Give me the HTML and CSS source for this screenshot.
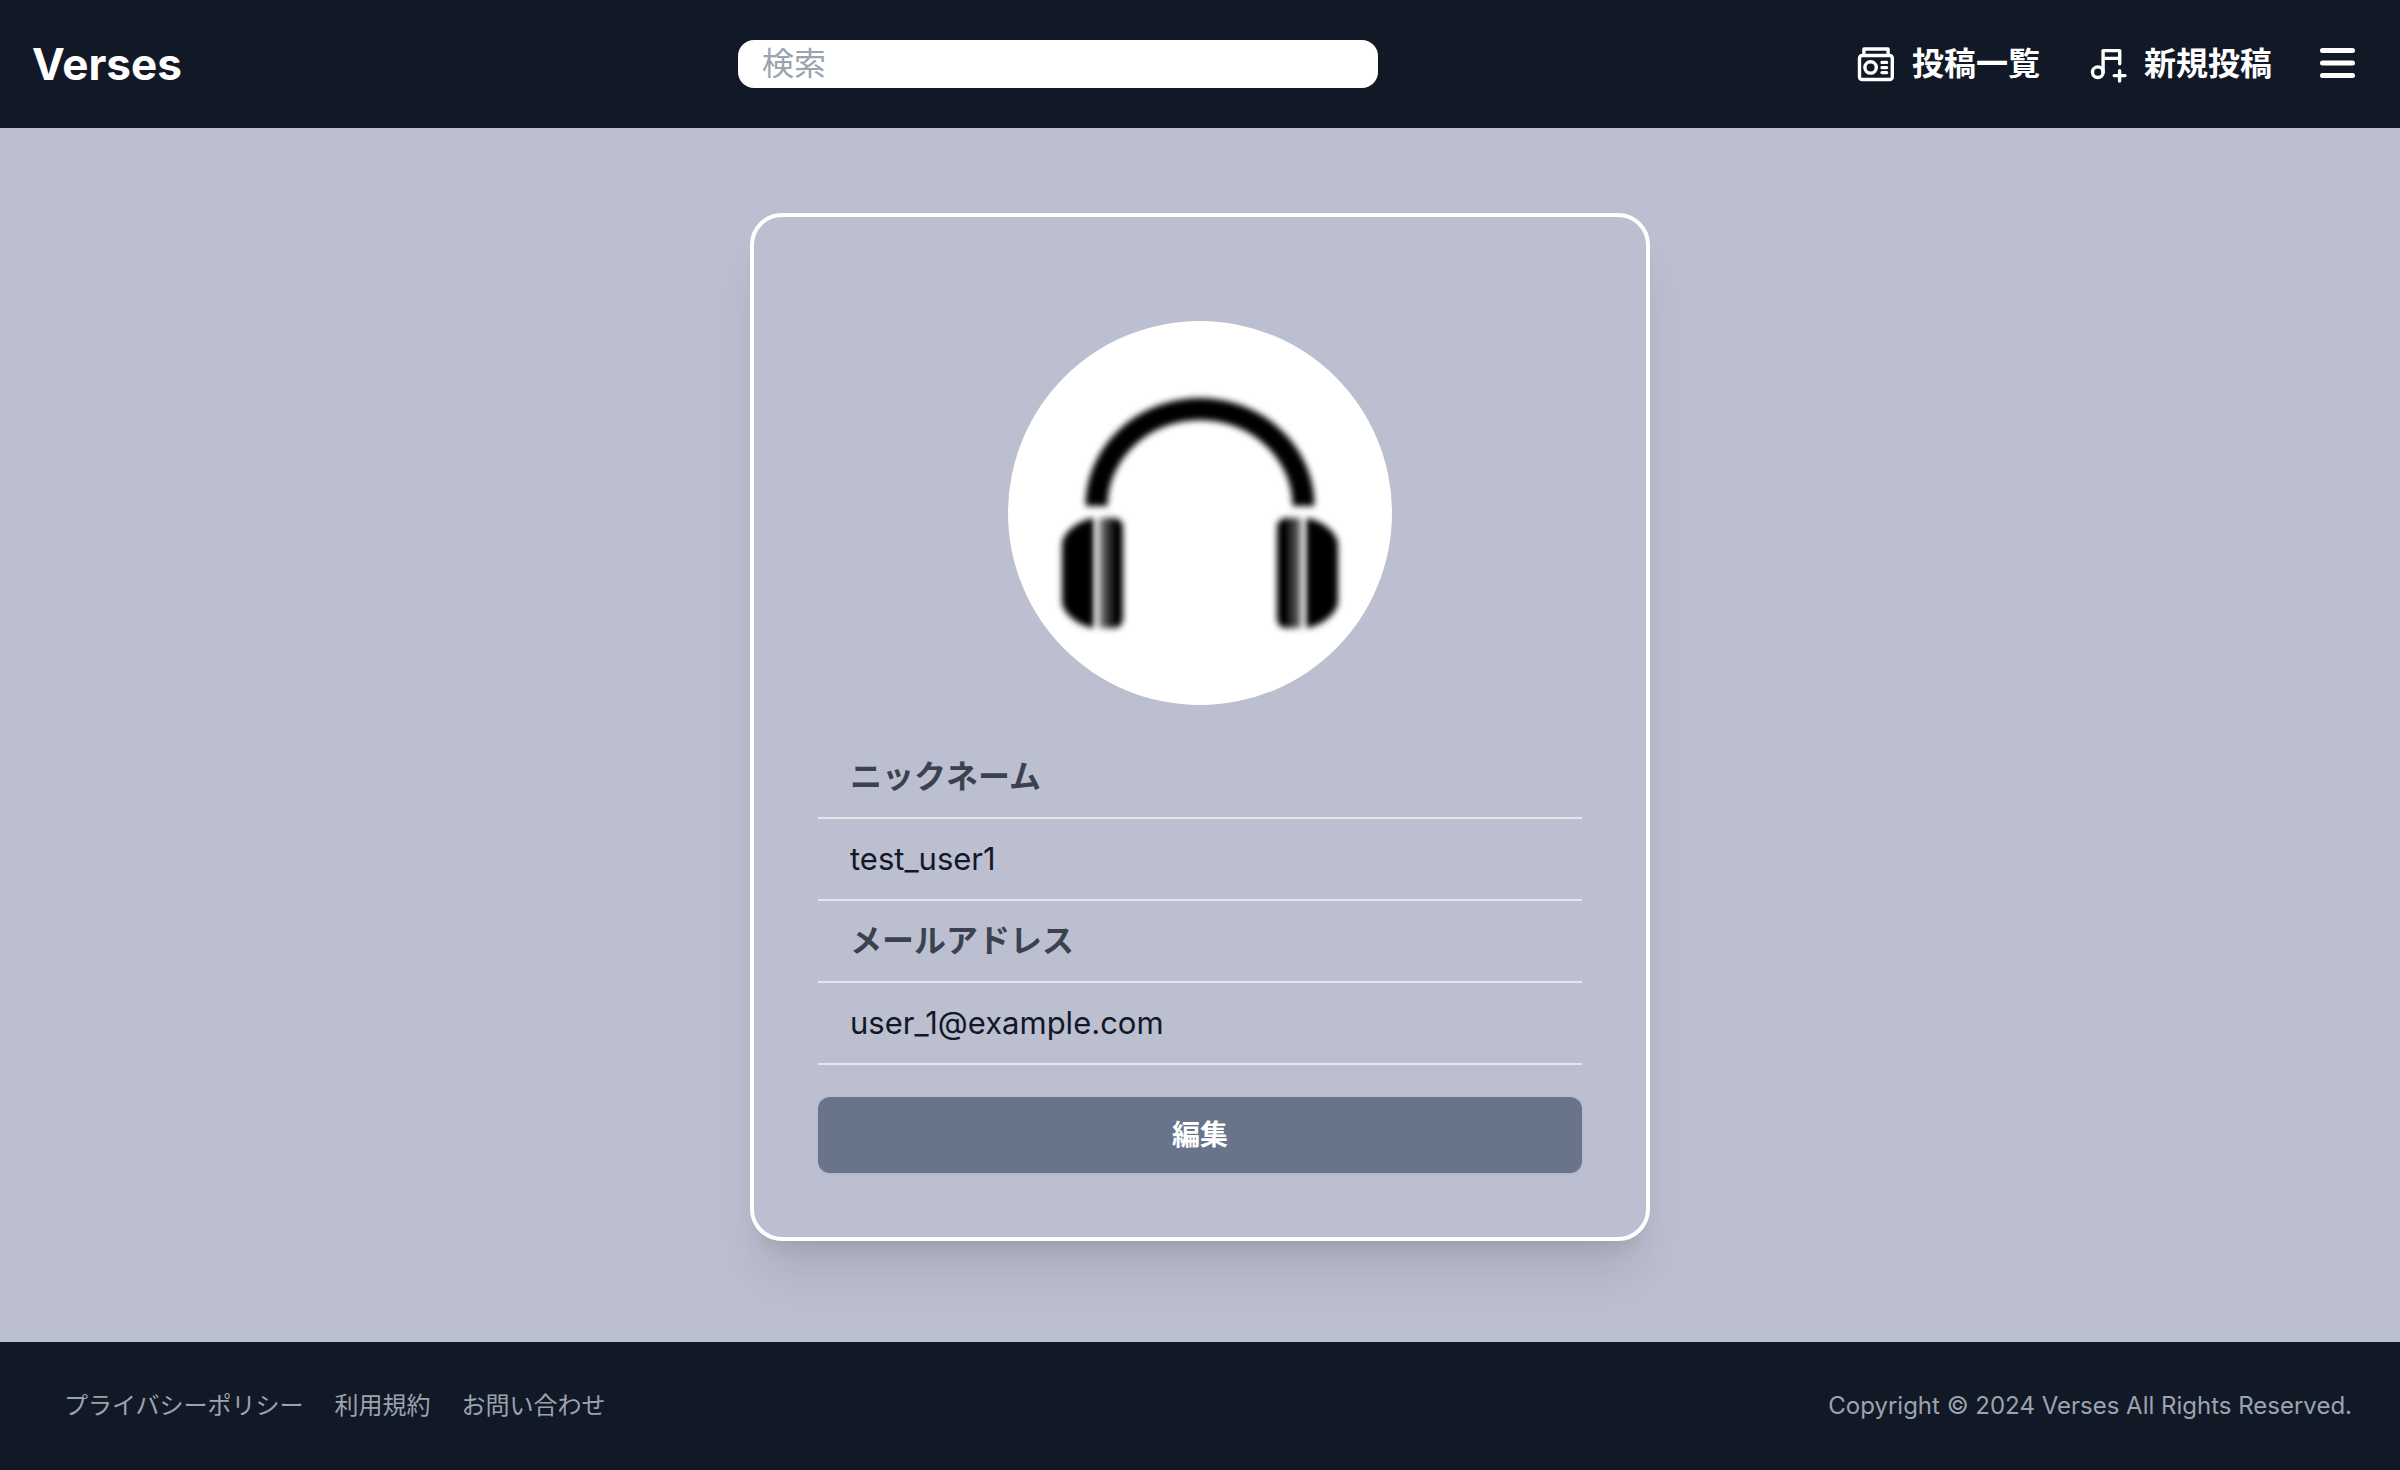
FILE: index.html
```html
<!DOCTYPE html>
<html lang="ja">
<head>
<meta charset="utf-8">
<meta name="viewport" content="width=device-width, initial-scale=1">
<title>Verses</title>
<link rel="stylesheet" href="styles.css">
</head>
<body>
<header class="header">
  <a class="logo" href="#">Verses</a>
  <form class="search" role="search">
    <input class="search-input" type="text" placeholder="検索" aria-label="検索">
  </form>
  <nav class="nav">
    <a class="nav-link" href="#">
      <svg class="nav-icon" viewBox="0 0 24 24" aria-hidden="true">
        <rect x="3.75" y="7.75" width="16.4" height="12" rx="1.3"/>
        <path d="M5.95 7.5V4.5h12.1v3"/>
        <circle cx="9.3" cy="13.7" r="2.85"/>
        <path d="M15 11.2h2.3M15 13.8h2.3M15 16.3h2.3"/>
      </svg>
      <span>投稿一覧</span>
    </a>
    <a class="nav-link" href="#">
      <svg class="nav-icon" viewBox="0 0 24 24" aria-hidden="true">
        <circle cx="6.9" cy="16.1" r="2.65"/>
        <path d="M9.55 16.1V5.3h8.3v6.6M9.55 9.2h8.3M17.8 15.3v5.2M15.1 17.8h5.4"/>
      </svg>
      <span>新規投稿</span>
    </a>
    <button class="menu-button" type="button" aria-label="メニュー">
      <svg class="menu-icon" viewBox="0 0 44 44" aria-hidden="true">
        <path d="M6.5 8.5h30M6.5 21h30M6.5 33.5h30"/>
      </svg>
    </button>
  </nav>
</header>

<main class="main">
  <section class="card">
    <svg class="avatar" viewBox="0 0 384 384" role="img" aria-label="プロフィール画像">
      <defs>
        <filter id="soft" x="-10%" y="-10%" width="120%" height="120%">
          <feGaussianBlur stdDeviation="3"/>
        </filter>
        <linearGradient id="pad-left">
          <stop offset="0" stop-color="#888"/>
          <stop offset="0.6" stop-color="#000"/>
        </linearGradient>
        <linearGradient id="pad-right">
          <stop offset="0.4" stop-color="#000"/>
          <stop offset="1" stop-color="#777"/>
        </linearGradient>
      </defs>
      <circle cx="192" cy="192" r="192" fill="#fff"/>
      <g filter="url(#soft)">
        <path d="M88.500 185A103.500 97 0 0 1 295.500 185" fill="none" stroke="#000" stroke-width="22"/>
        <path d="M86 197v110C70 305 54 292 54 280V224C54 212 70 199 86 197Z"/>
        <path d="M91 197h14q10 0 10 10v90q0 10-10 10H91Z" fill="url(#pad-left)"/>
        <path d="M293 197h-14q-10 0-10 10v90q0 10 10 10h14Z" fill="url(#pad-right)"/>
        <path d="M298 197v110C314 305 330 292 330 280V224C330 212 314 199 298 197Z"/>
      </g>
    </svg>
    <table class="profile">
      <tbody>
        <tr><th scope="row">ニックネーム</th></tr>
        <tr><td>test_user1</td></tr>
        <tr><th scope="row">メールアドレス</th></tr>
        <tr><td>user_1@example.com</td></tr>
      </tbody>
    </table>
    <button class="edit-button" type="button">編集</button>
  </section>
</main>

<footer class="footer">
  <nav class="footer-nav">
    <a href="#">プライバシーポリシー</a>
    <a href="#">利用規約</a>
    <a href="#">お問い合わせ</a>
  </nav>
  <p class="copyright">Copyright © 2024 Verses All Rights Reserved.</p>
</footer>
</body>
</html>
```
FILE: styles.css
```css
* {
  box-sizing: border-box;
}

body {
  margin: 0;
  min-height: 100vh;
  display: flex;
  flex-direction: column;
  background: #bbbfd0;
  color: #121826;
  font-family: Inter, "Noto Sans CJK JP", sans-serif;
  font-size: 32px;
  line-height: 48px;
}

a {
  color: inherit;
  text-decoration: none;
}

button {
  border: 0;
  padding: 0;
  color: inherit;
  font: inherit;
  cursor: pointer;
}

.header {
  display: grid;
  grid-template-columns: 706px minmax(0, 640px) 1fr;
  align-items: center;
  min-height: 128px;
  padding: 0 40px 0 32px;
  background: #121926;
  color: #fff;
}

.logo {
  justify-self: start;
  font-size: 44px;
  font-weight: 700;
}

.search-input {
  display: block;
  width: 100%;
  height: 48px;
  padding: 0 24px;
  border: 0;
  border-radius: 16px;
  background: #fff;
  color: #121826;
  font: inherit;
}

.search-input::placeholder {
  color: #9ca3af;
  opacity: 1;
}

.nav {
  justify-self: end;
  display: flex;
  align-items: center;
  gap: 44px;
}

.nav-link {
  display: flex;
  align-items: center;
  gap: 12px;
  font-weight: 700;
  white-space: nowrap;
}

.nav-icon {
  width: 48px;
  height: 48px;
  fill: none;
  stroke: currentColor;
  stroke-width: 1.7;
  stroke-linecap: round;
  stroke-linejoin: round;
}

.menu-button {
  display: flex;
  background: none;
}

.menu-icon {
  width: 44px;
  height: 44px;
  stroke: currentColor;
  stroke-width: 5;
  stroke-linecap: round;
}

.main {
  flex: 1;
  padding: 85px 32px 100px;
}

.card {
  display: flex;
  flex-direction: column;
  gap: 32px;
  max-width: 900px;
  margin: 0 auto;
  padding: 104px 64px 64px;
  border: 4px solid #fff;
  border-radius: 32px;
  box-shadow: 0 40px 50px -10px rgba(0, 0, 0, 0.1), 0 16px 20px -12px rgba(0, 0, 0, 0.1);
}

.avatar {
  align-self: center;
  width: 384px;
  height: 384px;
}

.profile {
  width: 100%;
  border-spacing: 0;
}

.profile th,
.profile td {
  padding: 16px 32px;
  border-bottom: 2px solid #e5e7eb;
  text-align: left;
}

.profile th {
  color: #3a4250;
  font-weight: 700;
}

.profile td {
  font-size: 31px;
}

.edit-button {
  padding: 16px;
  border-radius: 12px;
  background: #67748a;
  box-shadow: 0 2px 4px rgba(0, 0, 0, 0.05);
  color: #fff;
  font-size: 28px;
  font-weight: 700;
  line-height: 44px;
}

.footer {
  display: flex;
  align-items: center;
  justify-content: space-between;
  min-height: 128px;
  padding: 0 48px 0 64px;
  background: #121926;
  color: #9ca3af;
  font-size: 24px;
  line-height: 32px;
}

.footer-nav {
  display: flex;
  gap: 31px;
}

.copyright {
  margin: 0;
}
```
